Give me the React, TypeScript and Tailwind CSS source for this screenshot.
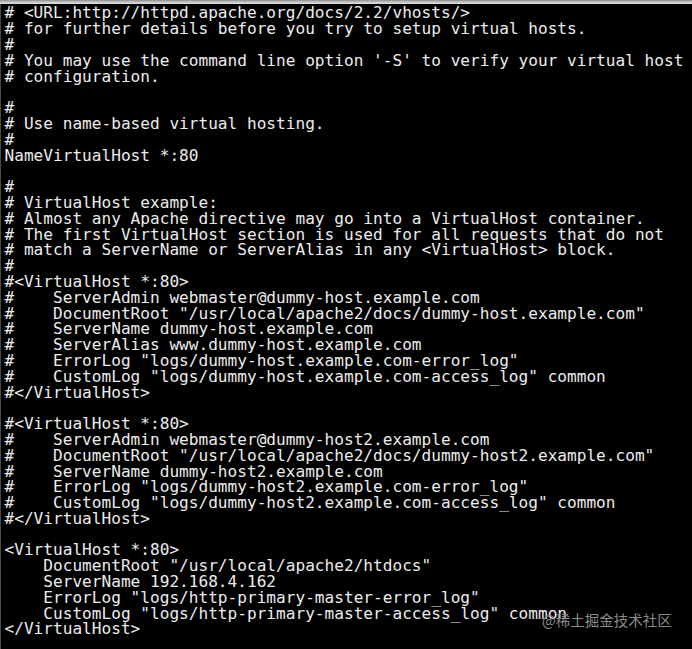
import React from "react";

const lines: string[] = [
  "# <URL:http://httpd.apache.org/docs/2.2/vhosts/>",
  "# for further details before you try to setup virtual hosts.",
  "#",
  "# You may use the command line option '-S' to verify your virtual host",
  "# configuration.",
  "",
  "#",
  "# Use name-based virtual hosting.",
  "#",
  "NameVirtualHost *:80",
  "",
  "#",
  "# VirtualHost example:",
  "# Almost any Apache directive may go into a VirtualHost container.",
  "# The first VirtualHost section is used for all requests that do not",
  "# match a ServerName or ServerAlias in any <VirtualHost> block.",
  "#",
  "#<VirtualHost *:80>",
  "#    ServerAdmin webmaster@dummy-host.example.com",
  "#    DocumentRoot \"/usr/local/apache2/docs/dummy-host.example.com\"",
  "#    ServerName dummy-host.example.com",
  "#    ServerAlias www.dummy-host.example.com",
  "#    ErrorLog \"logs/dummy-host.example.com-error_log\"",
  "#    CustomLog \"logs/dummy-host.example.com-access_log\" common",
  "#</VirtualHost>",
  "",
  "#<VirtualHost *:80>",
  "#    ServerAdmin webmaster@dummy-host2.example.com",
  "#    DocumentRoot \"/usr/local/apache2/docs/dummy-host2.example.com\"",
  "#    ServerName dummy-host2.example.com",
  "#    ErrorLog \"logs/dummy-host2.example.com-error_log\"",
  "#    CustomLog \"logs/dummy-host2.example.com-access_log\" common",
  "#</VirtualHost>",
  "",
  "<VirtualHost *:80>",
  "    DocumentRoot \"/usr/local/apache2/htdocs\"",
  "    ServerName 192.168.4.162",
  "    ErrorLog \"logs/http-primary-master-error_log\"",
  "    CustomLog \"logs/http-primary-master-access_log\" common",
  "</VirtualHost>",
];

export default function App() {
  return (
    <div className="relative w-[692px] h-[649px] overflow-hidden bg-black flex flex-col">
      <div className="h-[4px] w-full shrink-0 bg-gradient-to-b from-[#8e8e8e] via-[#c4c4c4] to-[#e2e2e2]" />
      <div className="flex-1 border-l border-l-[#4a4a4a] pl-[3.5px] pt-[1.4px]">
        <pre
          className="m-0 whitespace-pre text-[16.12px] leading-[15.8px] text-[#ececec]"
          style={{ fontFamily: '"DejaVu Sans Mono", "Liberation Mono", monospace' }}
        >
          {lines.join("\n")}
        </pre>
      </div>
      <div
        className="absolute left-[542px] top-[610px] text-[14.5px] leading-[20px] text-[#8c8c8c]"
        style={{ fontFamily: '"Noto Sans CJK SC", "Noto Sans", sans-serif' }}
      >
        @稀土掘金技术社区
      </div>
    </div>
  );
}
